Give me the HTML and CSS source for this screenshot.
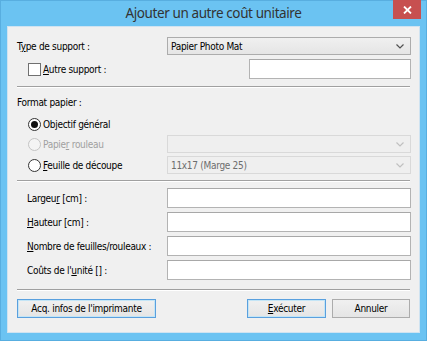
FILE: index.html
```html
<!DOCTYPE html>
<html lang="fr">
<head>
<meta charset="utf-8">
<title>Ajouter un autre coût unitaire</title>
<link rel="stylesheet" href="styles.css">
</head>
<body>
<div class="win">
  <div class="titlebar">
    <span class="title">Ajouter un autre coût unitaire</span>
    <div class="close">
      <svg width="9" height="8" viewBox="0 0 9 8"><path d="M1 0.5 L8 7.5 M8 0.5 L1 7.5" stroke="#fff" stroke-width="1.8" fill="none"/></svg>
    </div>
  </div>
  <div class="client">
    <div class="row r-type">
      <span class="lbl">T<u>y</u>pe de support :</span>
      <div class="select wide"><span>Papier Photo Mat</span>
        <svg class="chev" width="8" height="5" viewBox="0 0 8 5"><path d="M0.5 0.5 L4 4 L7.5 0.5" stroke="#505050" stroke-width="1.2" fill="none"/></svg>
      </div>
    </div>
    <div class="row r-autre">
      <span class="check"><span class="box"></span><span class="lbl"><u>A</u>utre support :</span></span>
      <div class="input short"></div>
    </div>
    <div class="sep s1"></div>
    <div class="row r-format"><span class="lbl">Format papier :</span></div>
    <div class="row r-radio1">
      <span class="radio on"><span class="dot"></span></span><span class="lbl">Objectif <u>g</u>énéral</span>
    </div>
    <div class="row r-radio2">
      <span class="rgrp"><span class="radio dis"></span><span class="lbl dim">Papie<u>r</u> rouleau</span></span>
      <div class="select wide disabled"><span></span>
        <svg class="chev" width="8" height="5" viewBox="0 0 8 5"><path d="M0.5 0.5 L4 4 L7.5 0.5" stroke="#c0c0c0" stroke-width="1.2" fill="none"/></svg>
      </div>
    </div>
    <div class="row r-radio3">
      <span class="rgrp"><span class="radio"></span><span class="lbl"><u>F</u>euille de découpe</span></span>
      <div class="select wide disabled"><span class="gray">11x17 (Marge 25)</span>
        <svg class="chev" width="8" height="5" viewBox="0 0 8 5"><path d="M0.5 0.5 L4 4 L7.5 0.5" stroke="#c0c0c0" stroke-width="1.2" fill="none"/></svg>
      </div>
    </div>
    <div class="sep s2"></div>
    <div class="fields">
      <span class="lbl">Largeu<u>r</u> [cm] :</span><div class="input"></div>
      <span class="lbl"><u>H</u>auteur [cm] :</span><div class="input"></div>
      <span class="lbl"><u>N</u>ombre de feuilles/rouleaux :</span><div class="input"></div>
      <span class="lbl">Coûts de l'<u>u</u>nité [] :</span><div class="input"></div>
    </div>
    <div class="sep s3"></div>
    <div class="buttons">
      <div class="btn b-acq focus">Acq. infos de l'imprimante</div>
      <div class="spacer"></div>
      <div class="btn b-exec focus"><u>E</u>xécuter</div>
      <div class="btn b-ann">Annuler</div>
    </div>
  </div>
</div>
</body>
</html>
```

FILE: styles.css
```css
html, body {
  margin: 0;
  padding: 0;
}
body {
  width: 427px;
  height: 341px;
  overflow: hidden;
  font-family: "DejaVu Sans Condensed", "DejaVu Sans", sans-serif;
  font-size: 10px;
  letter-spacing: -0.3px;
  color: #000;
}
.win {
  width: 427px;
  height: 341px;
  box-sizing: border-box;
  background: #6bc3f2;
  border: 1px solid #58aee0;
  display: flex;
  flex-direction: column;
}
.titlebar {
  height: 25px;
  position: relative;
  display: flex;
  align-items: center;
  justify-content: center;
}
.title {
  font-family: "Noto Sans", "Open Sans", sans-serif;
  font-size: 13.5px;
  letter-spacing: -0.4px;
  color: #333;
  margin-top: -2px;
}
.close {
  position: absolute;
  top: -1px;
  right: 5px;
  width: 28px;
  height: 19px;
  background: #c75050;
  display: flex;
  align-items: center;
  justify-content: center;
}
.client {
  margin: 0 6px 7px 6px;
  flex: 1;
  background: #f0f0f0;
  border: 1px solid #cfe3f1;
  padding: 0 8px 0 9px;
  display: flex;
  flex-direction: column;
}
.row {
  display: flex;
  align-items: center;
}
.lbl { white-space: nowrap; }
.lbl u, .btn u { text-decoration: underline; text-underline-offset: 1px; }
.r-type { margin-top: 10px; height: 18px; justify-content: space-between; }
.r-autre { margin-top: 4px; height: 20px; justify-content: space-between; }
.check { display: flex; align-items: center; margin-left: 11px; }
.box {
  width: 11px;
  height: 11px;
  border: 1px solid #707070;
  background: #fff;
  margin-right: 2px;
}
.select {
  box-sizing: border-box;
  height: 18px;
  border: 1px solid #acacac;
  background: linear-gradient(#f0f0f0, #e5e5e5);
  display: flex;
  align-items: center;
  justify-content: space-between;
  padding: 0 6px 0 3px;
}
.select.disabled {
  background: #efefef;
  border-color: #d9d9d9;
}
.wide { width: 244px; }
.gray { color: #6d6d6d; }
.input {
  box-sizing: border-box;
  height: 20px;
  border: 1px solid #b3b3b3;
  border-top-color: #a8a8a8;
  background: #fff;
}
.input.short { width: 162px; }
.sep {
  height: 1px;
  border-top: 1px solid #a0a0a0;
  background: #fff;
  margin-right: 1px;
}
.s1 { margin-top: 7px; }
.r-format { margin-top: 7px; height: 14px; }
.r-radio1 { margin-top: 5px; height: 20px; padding-left: 11px; }
.r-radio2 { height: 18px; justify-content: space-between; margin-top: 1px; }
.r-radio3 { height: 18px; justify-content: space-between; margin-top: 3px; }
.rgrp { display: flex; align-items: center; margin-left: 11px; }
.radio {
  width: 11px;
  height: 11px;
  border: 1px solid #333;
  border-radius: 50%;
  background: #fff;
  display: flex;
  align-items: center;
  justify-content: center;
  margin-right: 2px;
}
.radio.dis { border-color: #c4c4c4; background: #f4f4f4; }
.dot { width: 7px; height: 7px; border-radius: 50%; background: #111; }
.dim { color: #a0a0a0; }
.s2 { margin-top: 6px; }
.fields {
  margin-top: 6px;
  display: grid;
  grid-template-columns: 150px 244px;
  grid-auto-rows: 20px;
  row-gap: 4px;
  align-items: center;
}
.fields .lbl { padding-left: 10px; }
.s3 { margin-top: 9px; }
.buttons {
  margin-top: 8px;
  display: flex;
  gap: 6px;
  margin-right: 1px;
}
.spacer { flex: 1; }
.btn {
  box-sizing: border-box;
  height: 19px;
  border: 1px solid #acacac;
  background: linear-gradient(#f0f0f0, #e5e5e5);
  display: flex;
  align-items: center;
  justify-content: center;
}
.btn.focus { box-shadow: inset 0 0 0 1px #c4e5f6; border-color: #5aa0de; }
.b-acq { width: 139px; }
.b-exec { width: 79px; }
.b-ann { width: 78px; }
```
